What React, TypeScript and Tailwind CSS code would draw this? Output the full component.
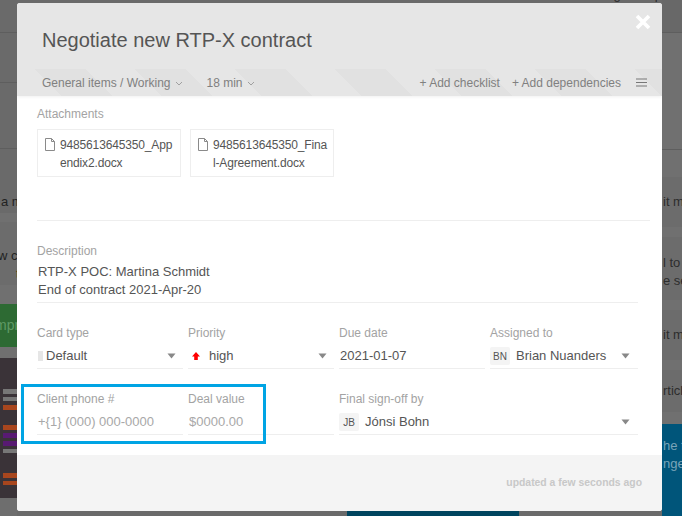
import React from "react";

const FONT = "font-['Liberation_Sans',Arial,sans-serif]";

function Caret() {
  return (
    <svg width="9" height="6" viewBox="0 0 9 6" className="shrink-0">
      <path d="M0.5 0.5H8.5L4.5 5.5Z" fill="#888888" />
    </svg>
  );
}

function Chevron() {
  return (
    <svg width="8" height="5" viewBox="0 0 8 5" className="ml-[4px] mt-[1px] shrink-0">
      <path d="M1 1L4 4L7 1" fill="none" stroke="#999999" strokeWidth="0.9" />
    </svg>
  );
}

function FileIcon() {
  return (
    <svg width="12" height="14" viewBox="0 0 12 14" className="mt-[2px] shrink-0">
      <path d="M1.5 0.5H7.5L10.5 3.5V12.5H1.5Z M7.5 0.5V3.5H10.5" fill="none" stroke="#8a8a8a" strokeWidth="1" />
    </svg>
  );
}

function Avatar({ text }: { text: string }) {
  return (
    <span className="mr-[6px] flex h-[18px] w-[20px] shrink-0 items-center justify-center rounded-[2px] bg-[#f4f4f4] text-[10px] text-[#555555]">
      {text}
    </span>
  );
}

function Field({
  label,
  children,
  className = "",
}: {
  label: string;
  children: React.ReactNode;
  className?: string;
}) {
  return (
    <div className={className}>
      <div className="h-[18px] text-[12px] leading-[18px] text-[#a3a3a3]">{label}</div>
      <div className="mt-[5px] flex h-[22px] items-center border-b border-[#eeeeee] pb-[3px] text-[13px] text-[#555555]">
        {children}
      </div>
    </div>
  );
}

function Attachment({ a, b }: { a: string; b: string }) {
  return (
    <div className="flex h-[48px] w-[144px] gap-[4px] border border-[#eeeeee] pl-[6px] pt-[6px] text-[12px] leading-[18px] tracking-[-0.15px] text-[#555555]">
      <FileIcon />
      <div>
        <div>{a}</div>
        <div>{b}</div>
      </div>
    </div>
  );
}

function LeftStrip() {
  return (
    <div className="flex h-full w-[17px] shrink-0 flex-col overflow-hidden bg-[#6a6a6a] text-[13px] text-[#222222]">
      <div className="h-[33px] border-b border-[#5e5e5e]" />
      <div className="h-[50px] border-b border-[#5e5e5e]" />
      <div className="h-[66px] border-b border-[#5e5e5e]" />
      <div className="h-[64px] whitespace-nowrap pt-[44px] pl-[1px] leading-[18px]">a m</div>
      <div className="h-[9px] bg-[#707070]" />
      <div className="h-[63px] whitespace-nowrap bg-[#6c6c6c] pl-[1px] pt-[25px] leading-[18px]">
        <div className="-ml-[3px]">w c</div>
        <div className="pl-[15px] text-[#5c3a00]">t</div>
      </div>
      <div className="h-[19px] bg-[#707070]" />
      <div className="h-[43px] whitespace-nowrap bg-[#2d6a33] pt-[12px] text-[14px] leading-[18px] text-[#5f9a65]">
        <span className="-ml-[5px] block">mpro</span>
      </div>
      <div className="h-[11px] bg-[#707070]" />
      <div className="flex h-[140px] flex-col bg-[#3a3338] pl-[3px] pt-[31px]">
        <div className="h-[5px] w-[14px] bg-[#777777]" />
        <div className="mt-[3px] h-[4px] w-[14px] bg-[#777777]" />
        <div className="mt-[4px] h-[5px] w-[14px] bg-[#a8461e]" />
        <div className="mt-[15px] h-[5px] w-[14px] bg-[#a8461e]" />
        <div className="mt-[3px] h-[5px] w-[14px] bg-[#581a72]" />
        <div className="mt-[3px] h-[5px] w-[14px] bg-[#581a72]" />
        <div className="mt-[3px] h-[4px] w-[14px] bg-[#777777]" />
        <div className="mt-[20px] h-[5px] w-[14px] bg-[#a8461e]" />
        <div className="mt-[3px] h-[4px] w-[14px] bg-[#a8461e]" />
      </div>
      <div className="flex-1 bg-[#6e6e6e]" />
    </div>
  );
}

function RightRow({ lines, cls }: { lines: React.ReactNode; cls: string }) {
  return <div className={`whitespace-nowrap pl-[1px] text-[13px] leading-[18px] text-[#2c2c2c] ${cls}`}>{lines}</div>;
}

function RightStrip() {
  return (
    <div className="flex h-full w-[20px] shrink-0 flex-col overflow-hidden bg-[#707070]">
      <div className="h-[33px] overflow-hidden border-b border-[#5e5e5e] bg-[#686868] text-[13px] leading-[16px] text-[#2c2c2c]">
        <div className="-mt-[13px] pl-[6px]">Too</div>
      </div>
      <div className="h-[117px] border-b border-[#5e5e5e]" />
      <div className="h-[27px]" />
      <RightRow cls="h-[50px] bg-[#6c6c6c] pt-[16px]" lines="it m" />
      <div className="h-[10px]" />
      <RightRow cls="h-[63px] bg-[#6c6c6c] pt-[17px]" lines={<><div>l to</div><div>e se</div></>} />
      <div className="h-[10px]" />
      <RightRow cls="h-[50px] bg-[#6c6c6c] pt-[16px]" lines="it m" />
      <div className="h-[10px]" />
      <RightRow cls="h-[42px] bg-[#6c6c6c] pt-[12px]" lines="rticl" />
      <div className="h-[12px]" />
      <div className="flex-1 whitespace-nowrap bg-[#00557a] pl-[1px] pt-[13px] text-[13px] leading-[18px] text-[#7aa4b8]">
        <div>he fi</div>
        <div>nge</div>
      </div>
    </div>
  );
}

function Center() {
  return (
    <div className="flex h-full min-w-0 flex-1 flex-col justify-between bg-[#6a6a6a]">
      <div className="h-[3px] overflow-hidden">
        <div className="-mt-[13px] flex justify-end gap-[8px] whitespace-nowrap text-[13px] leading-[16px] text-[#2c2c2c]">
          <span>Share</span>
          <span>Settings</span>
          <span>Help</span>
        </div>
      </div>
      <div className="flex h-[5px]">
        <div className="w-[330px]" />
        <div className="h-full w-[172px] bg-[#00455f]" />
      </div>
    </div>
  );
}

export default function App() {
  return (
    <div className={`relative flex h-[516px] w-[682px] overflow-hidden ${FONT}`}>
      <LeftStrip />
      <Center />
      <RightStrip />

      <div className="absolute left-[17px] top-[3px] flex h-[508px] w-[645px] flex-col overflow-hidden rounded-[3px] bg-white">
        <div className="relative h-[66px] shrink-0 bg-[#e6e6e6] pl-[25px] pt-[24px] text-[20px] leading-[26px] text-[#555555]">
          Negotiate new RTP-X contract
          <svg width="16" height="16" viewBox="0 0 16 16" className="absolute right-[11px] top-[11px]">
            <path d="M2 2L14 14M14 2L2 14" stroke="#ffffff" strokeWidth="3.6" fill="none" />
          </svg>
        </div>
        <div className="flex h-[27px] shrink-0 items-center bg-[#e6e6e6] bg-[repeating-linear-gradient(45deg,#e6e6e6_0,#e6e6e6_31.8px,#e1e1e1_31.8px,#e1e1e1_67.2px,#e6e6e6_67.2px,#e6e6e6_70.71px)] pl-[25px] pr-[15px] text-[12px] text-[#808080] shadow-[0_1px_3px_rgba(0,0,0,0.06)]">
          <span>General items / Working</span>
          <Chevron />
          <span className="ml-[24px]">18 min</span>
          <Chevron />
          <span className="ml-auto">+ Add checklist</span>
          <span className="ml-[12px]">+ Add dependencies</span>
          <svg width="11" height="9" viewBox="0 0 11 9" className="ml-[15px]">
            <path d="M0 1H11M0 4.5H11M0 8H11" stroke="#777777" strokeWidth="1.1" />
          </svg>
        </div>

        <div className="flex-1 pl-[20px] pr-[12px] pt-[9px]">
          <div className="h-[18px] text-[12px] leading-[18px] text-[#a3a3a3]">Attachments</div>
          <div className="mt-[6px] flex gap-[9px]">
            <Attachment a="9485613645350_App" b="endix2.docx" />
            <Attachment a="9485613645350_Fina" b="l-Agreement.docx" />
          </div>
          <div className="mt-[43px] border-t border-[#eeeeee]" />

          <div className="mt-[21px] mr-[12px]">
            <div className="h-[18px] text-[12px] leading-[18px] text-[#a3a3a3]">Description</div>
            <div className="border-b border-[#eeeeee] pb-[3px] pl-[1px] pt-[3px] text-[13px] leading-[18px] text-[#555555]">
              <div>RTP-X POC: Martina Schmidt</div>
              <div>End of contract 2021-Apr-20</div>
            </div>
          </div>

          <div className="mr-[12px] mt-[21px] grid grid-cols-[146px_146px_146px_148px] gap-x-[5px] gap-y-[21px]">
            <Field label="Card type">
              <span className="ml-[1px] mr-[3px] h-[10px] w-[5px] bg-[#e6e6e6]" />
              <span className="flex-1">Default</span>
              <span className="mr-[7px]"><Caret /></span>
            </Field>
            <Field label="Priority">
              <svg width="10" height="10" viewBox="0 0 10 10" className="ml-[3px] mr-[8px]">
                <path d="M5 1L9 5.5H6.8V9H3.2V5.5H1Z" fill="#ff0000" />
              </svg>
              <span className="flex-1">high</span>
              <span className="mr-[7px]"><Caret /></span>
            </Field>
            <Field label="Due date">
              <span className="pl-[1px]">2021-01-07</span>
            </Field>
            <Field label="Assigned to">
              <Avatar text="BN" />
              <span className="flex-1">Brian Nuanders</span>
              <span className="mr-[8px]"><Caret /></span>
            </Field>

            <Field label="Client phone #">
              <span className="pl-[1px] text-[#a8a8a8]">+{"{1}"} (000) 000-0000</span>
            </Field>
            <Field label="Deal value">
              <span className="pl-[1px] text-[#a8a8a8]">$0000.00</span>
            </Field>
            <Field label="Final sign-off by" className="col-span-2">
              <Avatar text="JB" />
              <span className="flex-1">Jónsi Bohn</span>
              <span className="mr-[8px]"><Caret /></span>
            </Field>
          </div>
        </div>

        <div className="flex h-[56px] shrink-0 items-start justify-end bg-[#f4f4f4] pr-[20px] pt-[21px] text-[10.4px] font-bold leading-[14px] text-[#c8c8c8]">
          updated a few seconds ago
        </div>
      </div>

      <div className="absolute left-[21px] top-[384px] h-[60px] w-[245px] border-[3px] border-[#00a4e4]" />
    </div>
  );
}
